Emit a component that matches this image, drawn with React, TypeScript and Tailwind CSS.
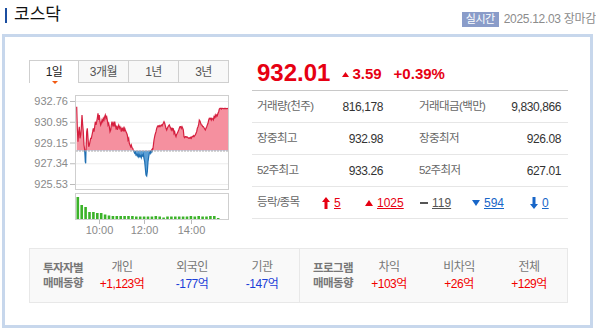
import React from "react";

const FONT = { fontFamily: '"Liberation Sans", "Noto Sans CJK KR", sans-serif' };

// price line traced in two halves (3x zoom coordinates)
const PART_A: [number, number][] = [
  [8, 35], [10, 100], [12, 140], [14, 110], [16, 95], [18, 130], [20, 120], [22, 100], [24, 60], [26, 90],
  [28, 110], [30, 150], [32, 165], [34, 200], [35, 205], [36, 165], [38, 110], [40, 100], [42, 130], [44, 155],
  [46, 150], [48, 140], [50, 130], [52, 130], [54, 120], [56, 110], [58, 100], [60, 110], [62, 95], [64, 80],
  [66, 90], [68, 80], [70, 70], [72, 55], [74, 75], [76, 60], [78, 80], [80, 90], [82, 85], [84, 75],
  [86, 80], [88, 70], [90, 75], [92, 65], [94, 60], [96, 70], [98, 65], [100, 75], [102, 90], [104, 85],
  [106, 95], [108, 110], [110, 105], [112, 90], [114, 80], [116, 90], [118, 85], [120, 95], [122, 80], [124, 90],
  [126, 100], [128, 95], [130, 105], [132, 95], [134, 90], [136, 100], [138, 95], [140, 100], [142, 110], [144, 100],
  [146, 105], [148, 100], [150, 110], [152, 100], [154, 105], [156, 110], [158, 115], [160, 120], [162, 135], [164, 130],
  [166, 145], [168, 150], [170, 155], [172, 150], [174, 158], [176, 160], [178, 165], [180, 170], [182, 175], [184, 172],
  [186, 180], [188, 178], [190, 183], [192, 178], [194, 185], [196, 180], [198, 185], [200, 182], [202, 188], [204, 180],
  [206, 183], [208, 178], [210, 190], [212, 200], [214, 220], [216, 240], [218, 243], [220, 230], [222, 200], [224, 185],
  [226, 175], [228, 170], [230, 175], [232, 170], [234, 168], [236, 160],
];
const PART_B: [number, number][] = [
  [3, 168], [6, 170], [9, 160], [12, 135], [15, 120], [18, 110], [20, 100], [22, 95], [24, 92], [26, 95],
  [28, 92], [30, 95], [32, 92], [34, 90], [36, 93], [38, 88], [40, 85], [42, 80], [44, 85], [46, 92],
  [48, 100], [50, 105], [52, 100], [54, 95], [56, 92], [58, 90], [60, 95], [62, 100], [64, 105], [66, 100],
  [68, 105], [70, 100], [72, 115], [74, 110], [76, 120], [78, 125], [80, 118], [82, 115], [84, 110], [86, 105],
  [88, 100], [90, 95], [92, 95], [94, 100], [96, 95], [98, 100], [100, 105], [102, 125], [104, 128], [106, 125],
  [108, 125], [110, 127], [112, 126], [114, 128], [116, 130], [118, 128], [120, 130], [122, 127], [124, 130], [126, 125],
  [128, 125], [130, 122], [132, 125], [134, 122], [136, 120], [138, 115], [140, 110], [142, 100], [144, 95], [146, 88],
  [148, 75], [150, 78], [152, 85], [154, 90], [156, 90], [158, 95], [160, 95], [162, 98], [164, 102], [166, 105],
  [168, 100], [170, 95], [172, 90], [174, 85], [176, 75], [178, 70], [180, 72], [182, 70], [184, 75], [186, 70],
  [188, 72], [190, 75], [192, 65], [194, 68], [196, 60], [198, 65], [200, 60], [202, 62], [204, 55], [206, 50],
  [208, 42], [210, 40], [212, 40], [214, 42], [216, 40], [220, 41], [225, 40], [230, 41], [236, 40],
];

const POINTS: [number, number][] = [
  ...PART_A.map(([x, y]) => [45 + x / 3, 12 + y / 3] as [number, number]),
  ...PART_B.map(([x, y]) => [121 + x / 3, 12 + y / 3] as [number, number]),
];

const BASE = 67.5;
const linePath = POINTS.map(([x, y], i) => `${i ? "L" : "M"}${x.toFixed(1)},${y.toFixed(1)}`).join(" ");
const areaPath = `${linePath} L${POINTS[POINTS.length - 1][0].toFixed(1)},${BASE} L${POINTS[0][0].toFixed(1)},${BASE} Z`;

const VOLUME = [22, 14, 12, 7, 7, 6, 6, 4.5, 3.5, 3, 3, 3, 3, 3, 3, 2.5, 2.5, 2.5, 2.5, 2.5, 3, 2.5, 1.5, 2.5, 2.5, 2.5, 2.5, 2.5, 2.5, 3, 2.5, 3, 2.5, 2.5, 3, 3, 1];

const Y_LABELS = [
  { v: "932.76", y: 18 },
  { v: "930.95", y: 38.75 },
  { v: "929.15", y: 59.5 },
  { v: "927.34", y: 80.25 },
  { v: "925.53", y: 101 },
];

function Chart() {
  return (
    <svg width="200" height="160" viewBox="0 0 200 160" className="block">
      <defs>
        <clipPath id="up">
          <rect x="46" y="0" width="154" height={BASE} />
        </clipPath>
        <clipPath id="down">
          <rect x="46" y={BASE} width="154" height={106 - BASE} />
        </clipPath>
      </defs>
      {Y_LABELS.map((l) => (
        <g key={l.v}>
          <line x1="47" x2="199" y1={l.y + 0.5} y2={l.y + 0.5} stroke="#ececec" />
          <line x1="41" x2="46" y1={l.y + 0.5} y2={l.y + 0.5} stroke="#bbb" />
          <text x="39" y={l.y + 4} textAnchor="end" fontSize="11" fill="#8a8a8a" style={FONT}>
            {l.v}
          </text>
        </g>
      ))}
      <path d={areaPath} fill="#f5909f" clipPath="url(#up)" />
      <path d={areaPath} fill="#5b9fd6" clipPath="url(#down)" />
      <path d={linePath} fill="none" stroke="#d5203f" strokeWidth="1.2" clipPath="url(#up)" />
      <path d={linePath} fill="none" stroke="#1f6fb2" strokeWidth="1.2" clipPath="url(#down)" />
      <line x1="47" x2="199" y1={BASE + 0.5} y2={BASE + 0.5} stroke="#aaa" strokeDasharray="2 1" />
      <rect x="46.5" y="12.5" width="153" height="94" fill="none" stroke="#cfcfcf" />

      <rect x="46.5" y="110.5" width="153" height="26" fill="none" stroke="#cfcfcf" />
      {VOLUME.map((h, i) => (
        <rect key={i} x={47.5 + i * 3.9} y={136 - h} width="2.6" height={h} fill="#3cb32a" />
      ))}
      {[
        { x: 70, t: "10:00" },
        { x: 115, t: "12:00" },
        { x: 162, t: "14:00" },
      ].map((t) => (
        <g key={t.t}>
          <line x1={t.x + 0.5} x2={t.x + 0.5} y1="137" y2="141" stroke="#bbb" />
          <text x={t.x + 0.5} y="151" textAnchor="middle" fontSize="11" fill="#8a8a8a" style={FONT}>
            {t.t}
          </text>
        </g>
      ))}
    </svg>
  );
}

function Tabs() {
  const tabs = ["1일", "3개월", "1년", "3년"];
  return (
    <div className="flex h-[23px]">
      {tabs.map((t, i) => (
        <div
          key={t}
          className={
            i === 0
              ? "relative flex w-[50px] items-center justify-center border border-b-0 border-[#cfcfcf] bg-white text-[12px] text-[#222]"
              : "flex w-[50px] items-center justify-center border border-l-0 border-[#cfcfcf] bg-[#f8f8f8] text-[12px] text-[#555]"
          }
        >
          <span className="tracking-[-0.5px]">{t}</span>
          {i === 0 && (
            <svg width="6" height="3" viewBox="0 0 6 3" className="absolute bottom-[-1px] left-[22px]">
              <polygon points="0,0 6,0 3,3" fill="#f25a12" />
            </svg>
          )}
        </div>
      ))}
    </div>
  );
}

function StatRow({ a, av, b, bv }: { a: string; av: string; b: string; bv: string }) {
  return (
    <div className="flex h-[32px] items-center border-b border-[#e6e6e6] text-[12px]">
      <div className="flex w-[131px] justify-between pl-[5px]">
        <span className="text-[#666] text-[11.5px] tracking-[-0.6px]">{a}</span>
        <span className="text-[#333] tracking-[-0.4px]">{av}</span>
      </div>
      <div className="ml-[36px] flex w-[142px] justify-between">
        <span className="text-[#666] text-[11.5px] tracking-[-0.6px]">{b}</span>
        <span className="text-[#333] tracking-[-0.4px]">{bv}</span>
      </div>
    </div>
  );
}

function Breadth() {
  return (
    <div className="flex h-[32px] items-center border-b border-[#e6e6e6] text-[12px]">
      <span className="w-[70px] pl-[5px] text-[11.5px] tracking-[-0.6px] text-[#666]">등락/종목</span>
      <div className="flex w-[43px] items-center gap-[4px]">
        <svg width="8" height="12" viewBox="0 0 8 12">
          <polygon points="4,0 8,5 5.5,5 5.5,12 2.5,12 2.5,5 0,5" fill="#e60012" />
        </svg>
        <span className="text-[#e60012] underline">5</span>
      </div>
      <div className="flex w-[55px] items-center gap-[4px]">
        <svg width="8" height="6" viewBox="0 0 8 6">
          <polygon points="4,0 8,6 0,6" fill="#e60012" />
        </svg>
        <span className="text-[#e60012] underline">1025</span>
      </div>
      <div className="flex w-[52px] items-center gap-[4px]">
        <svg width="8" height="2" viewBox="0 0 8 2">
          <rect width="8" height="2" fill="#555" />
        </svg>
        <span className="text-[#555] underline">119</span>
      </div>
      <div className="flex w-[58px] items-center gap-[4px]">
        <svg width="8" height="6" viewBox="0 0 8 6">
          <polygon points="0,0 8,0 4,6" fill="#1866c8" />
        </svg>
        <span className="text-[#1866c8] underline">594</span>
      </div>
      <div className="flex items-center gap-[4px]">
        <svg width="8" height="12" viewBox="0 0 8 12">
          <polygon points="2.5,0 5.5,0 5.5,7 8,7 4,12 0,7 2.5,7" fill="#1866c8" />
        </svg>
        <span className="text-[#1866c8] underline">0</span>
      </div>
    </div>
  );
}

function Flow({ title, items, labelW }: { title: [string, string]; items: { n: string; v: string; up: boolean }[]; labelW: string }) {
  return (
    <div className="flex h-full items-center pl-[13px]">
      <div className={`${labelW} text-[11.5px] font-bold leading-[15px] tracking-[-0.6px] text-[#777]`}>
        <div>{title[0]}</div>
        <div>{title[1]}</div>
      </div>
      {items.map((it) => (
        <div key={it.n} className="flex w-[70px] flex-col items-center leading-[17px]">
          <span className="text-[12px] tracking-[-0.5px] text-[#777]">{it.n}</span>
          <span className={`text-[12px] tracking-[-0.5px] ${it.up ? "text-[#f20000]" : "text-[#1b3fd8]"}`}>{it.v}</span>
        </div>
      ))}
    </div>
  );
}

export default function App() {
  return (
    <div className="h-[330px] w-[596px] overflow-hidden bg-white" style={FONT}>
      {/* Header */}
      <div className="flex h-[34px] items-start justify-between">
        <div className="flex items-center gap-[7px] pl-[5px] pt-[6px]">
          <div className="h-[15px] w-[2px] bg-[#1b4ea0]" />
          <span className="text-[17px] leading-[18px] text-[#111]">코스닥</span>
        </div>
        <div className="flex items-center gap-[5px] pt-[12px]">
          <span className="h-[15px] bg-[#8a9cc9] px-[4px] text-[11px] leading-[15px] tracking-[-0.5px] text-white">실시간</span>
          <span className="whitespace-nowrap text-[12px] leading-[15px] tracking-[-0.3px] text-[#8c8c8c]">2025.12.03 장마감</span>
        </div>
      </div>

      {/* Main box */}
      <div className="ml-[2px] h-[294px] w-[591px] border-[3px] border-[#c7d7ec] pl-[24px] pt-[23px]">
        <div className="flex h-[188px] gap-[23px]">
          <div className="w-[200px]">
            <Tabs />
            <Chart />
          </div>

          <div className="w-[316px]">
            <div className="flex h-[31px] items-start border-b border-[#c8c8c8] pl-[5px]">
              <span className="text-[24px] font-bold leading-[26px] text-[#e60012]">932.01</span>
              <div className="ml-[12px] flex items-center pt-[5px] text-[15px] font-bold leading-[18px] text-[#e60012]">
                <svg width="7" height="5" viewBox="0 0 7 5" className="mr-[3px]">
                  <polygon points="3.5,0 7,5 0,5" fill="#e60012" />
                </svg>
                <span>3.59</span>
                <span className="ml-[12px]">+0.39%</span>
              </div>
            </div>
            <StatRow a="거래량(천주)" av="816,178" b="거래대금(백만)" bv="9,830,866" />
            <StatRow a="장중최고" av="932.98" b="장중최저" bv="926.08" />
            <StatRow a="52주최고" av="933.26" b="52주최저" bv="627.01" />
            <Breadth />
          </div>
        </div>

        {/* Investor flows */}
        <div className="flex h-[55px] w-[539px] border border-[#e8e8e8] bg-[#f9f9f9]">
          <div className="w-[270px] border-r border-[#e8e8e8]">
            <Flow
              title={["투자자별", "매매동향"]}
              labelW="w-[44px]"
              items={[
                { n: "개인", v: "+1,123억", up: true },
                { n: "외국인", v: "-177억", up: false },
                { n: "기관", v: "-147억", up: false },
              ]}
            />
          </div>
          <div className="flex-1">
            <Flow
              title={["프로그램", "매매동향"]}
              labelW="w-[41px]"
              items={[
                { n: "차익", v: "+103억", up: true },
                { n: "비차익", v: "+26억", up: true },
                { n: "전체", v: "+129억", up: true },
              ]}
            />
          </div>
        </div>
      </div>
    </div>
  );
}
